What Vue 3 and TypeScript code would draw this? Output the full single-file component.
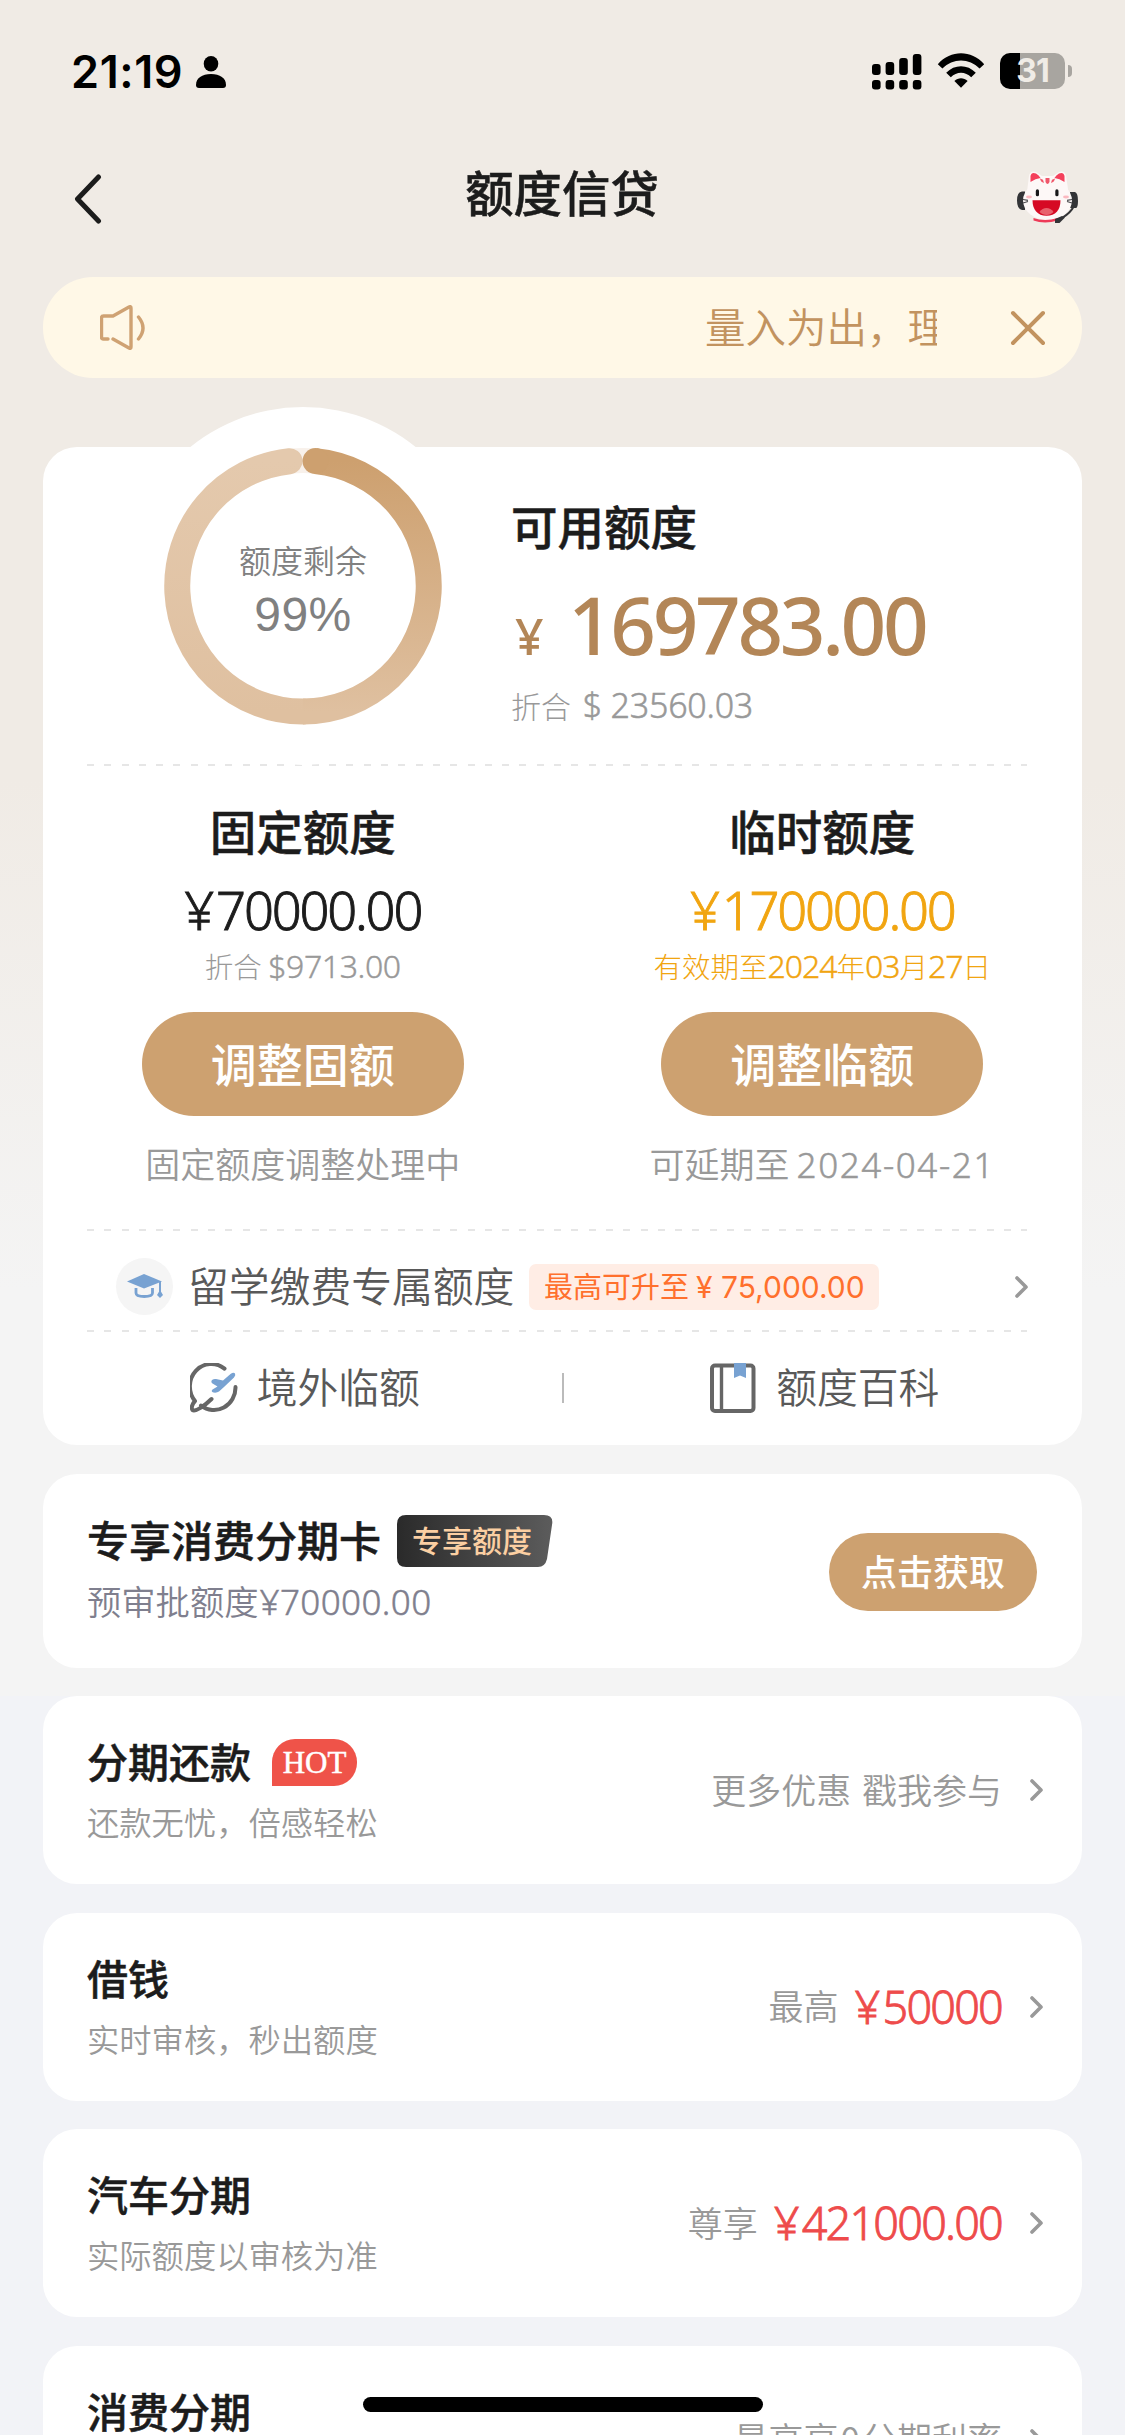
<script setup lang="ts">
interface Product {
  title: string
  sub?: string
  hot?: boolean
  hint: string
  amount?: string
}

const products: Product[] = [
  { title: '分期还款', sub: '还款无忧，倍感轻松', hot: true, hint: '更多优惠 戳我参与' },
  { title: '借钱', sub: '实时审核，秒出额度', hint: '最高', amount: '50000' },
  { title: '汽车分期', sub: '实际额度以审核为准', hint: '尊享', amount: '421000.00' },
  { title: '消费分期', hint: '最高享\u200a0\u200a分期利率' },
]
const signalBars = [11, 13, 17, 21]
</script>

<template>
  <div class="page">
    <div class="status">
      <span class="time">21:19</span>
      <svg class="person" width="30" height="32" viewBox="0 0 30 32">
        <ellipse cx="15" cy="7.8" rx="7.3" ry="7.8" />
        <path d="M0 29C0 22 6 18 15 18s15 4 15 11c0 2-1 3-3 3H3c-2 0-3-1-3-3z" />
      </svg>
      <div class="grow"></div>
      <svg class="signal" width="50" height="36" viewBox="0 0 50 36">
        <g v-for="(h, i) in signalBars" :key="i">
          <rect :x="i * 13.6" :y="21 - h" width="8.6" :height="h" rx="3" />
          <rect :x="i * 13.6" y="26" width="8.6" height="9.4" rx="3" />
        </g>
      </svg>
      <svg class="wifi" width="48" height="36" viewBox="0 0 48 36">
        <path d="M.8 11.2C14-3.300 34-3.300 47.200 11.200l-4.600 4.400C32 4.800 16 4.800 5.400 15.600z" />
        <path d="M9.200 19.800c8.400-8.600 21.200-8.600 29.600 0l-4.600 4.500c-5.800-6-14.600-6-20.400 0z" />
        <path d="M17.400 28c3.800-3.600 9.400-3.600 13.200 0L24 34.700z" />
      </svg>
      <div class="battery"><span>31</span></div>
      <div class="nub"></div>
    </div>

    <header class="nav">
      <svg class="back" width="28" height="50" viewBox="0 0 28 50">
        <path d="M24.500 3 3.500 25l21 22" fill="none" stroke="#1c1c1c" stroke-width="5" stroke-linecap="round" stroke-linejoin="round" />
      </svg>
      <h1>额度信贷</h1>
      <svg class="mascot" width="62" height="56" viewBox="0 0 62 56">
        <path d="M8 21.500H5Q0 22 0 30.500T5 40h3zM53 22h5q3 1 3 9t-3 7h-5z" fill="#333437" />
        <path d="M10 22 12 6q1-6 7-4l6 4h11l6-4q6-2 7 4l2.500 16z" fill="#fdf8f7" />
        <ellipse cx="30.500" cy="30.500" rx="24.500" ry="19.500" fill="#fdf8f7" />
        <path d="M13.500 12V6q1-4.500 5.500-2.500 3 1.500 4.500 4.500-5 .5-10 4zM47.500 12V6q-1-4.500-5.500-2.500-3 1.500-4.500 4.500 5 .5 10 4z" fill="#f4405b" />
        <path d="M28.500 8h4v4q-2 4-4 0zM23 8.500l3 1.200 1 3.300q-3.500-1-4-4.500zM38 8.500l-3 1.200-1 3.300q3.500-1 4-4.500z" fill="#f0566a" />
        <rect x="18.800" y="19.300" width="3.200" height="7" rx="1.600" fill="#18181a" />
        <rect x="38.300" y="19.300" width="3.200" height="7" rx="1.600" fill="#18181a" />
        <ellipse cx="12" cy="27" rx="3" ry="1.400" fill="#fbb9c0" />
        <ellipse cx="49" cy="27" rx="3" ry="1.400" fill="#fbb9c0" />
        <path d="M15.500 30.200h28c0 10-5 15.500-14 15.500s-14-6-14-15.500z" fill="#d60a24" />
        <path d="M22.500 42c3.500-5.500 10.500-5.500 14 0-4 4-10 4-14 0z" fill="#e8616c" />
        <path d="M6 29.500l5 .8M6 33l5-1.500M55 29.500l-5 .8M55 33l-5-1.500" stroke="#4a4a4d" stroke-width="1.200" />
        <path d="M16.500 48c7 2.500 16 2.500 24 0v2.500c-8 2.500-17 2.500-24 0z" fill="#ee3a58" />
        <path d="M57 36c-3 6-7 9-12 12" fill="none" stroke="#333437" stroke-width="2" />
        <path d="M38 49l7-3 3 1.500-5.500 5.500H38z" fill="#333437" />
      </svg>
    </header>

    <section class="notice">
      <svg class="speaker" width="48" height="46" viewBox="0 0 48 46" fill="none" stroke="#cfa273" stroke-width="3.400" stroke-linecap="round" stroke-linejoin="round">
        <path d="M8 34H3.500q-2 0-2-2V13q0-2 2-2H13L29 2q2-1 2 1v39q0 2-2 1L13 34" />
        <path d="M38.500 12q9 11 0 22" />
      </svg>
      <div class="ticker"><span>量入为出，理</span></div>
      <svg class="close" width="36" height="36" viewBox="0 0 36 36">
        <path d="M3 3 33 33M33 3 3 33" stroke="#c2935f" stroke-width="4" stroke-linecap="round" />
      </svg>
    </section>

    <main class="panel">
      <div class="halo"></div>
      <div class="hero">
        <div class="gauge">
          <svg width="278" height="278" viewBox="0 0 278 278">
            <defs>
              <linearGradient id="ringRight" x1="0" y1="0" x2="0" y2="1">
                <stop offset="0" stop-color="#cda06f" />
                <stop offset="1" stop-color="#dfc0a0" />
              </linearGradient>
              <linearGradient id="ringLeft" x1="0" y1="0" x2="0" y2="1">
                <stop offset="0" stop-color="#e4c9ad" />
                <stop offset="1" stop-color="#dfc0a0" />
              </linearGradient>
            </defs>
            <circle cx="139" cy="139" r="125.500" fill="none" stroke="#f8f1eb" stroke-width="25" />
            <path d="M139 264.500A125.500 125.500 0 0 1 125.500 14.200" fill="none" stroke="url(#ringLeft)" stroke-width="26" stroke-linecap="round" />
            <path d="M151.500 14.100A125.500 125.500 0 0 1 139 264.500" fill="none" stroke="url(#ringRight)" stroke-width="26" />
            <circle cx="151.500" cy="14.100" r="13" fill="#cda06f" />
          </svg>
          <div class="gauge-text">
            <span class="gauge-label">额度剩余</span>
            <span class="gauge-value">99%</span>
          </div>
        </div>
        <div class="avail">
          <h2>可用额度</h2>
          <div class="big"><i>¥</i><b>169783.00</b></div>
          <div class="conv">折合 <em>$ 23560.03</em></div>
        </div>
      </div>

      <div class="dash"></div>
      <div class="cols">
        <div class="col">
          <h2>固定额度</h2>
          <div class="amt"><i>¥</i>70000.00</div>
          <div class="small">折合 <em>$9713.00</em></div>
          <button>调整固额</button>
          <div class="note">固定额度调整处理中</div>
        </div>
        <div class="col">
          <h2>临时额度</h2>
          <div class="amt gold"><i>¥</i>170000.00</div>
          <div class="small gold">有效期至<em>2024</em>年<em>03</em>月<em>27</em>日</div>
          <button>调整临额</button>
          <div class="note">可延期至<em>2024-04-21</em></div>
        </div>
      </div>

      <div class="dash"></div>
      <div class="study">
        <div class="cap">
          <svg width="36" height="26" viewBox="0 0 36 26">
            <path d="M0 7.500 17 0l18 7.500L17 14.500z" fill="#78a2d2" />
            <path d="M9 14v5q0 3.500 8.200 3.500T25.500 19v-5" fill="none" stroke="#78a2d2" stroke-width="2.800" />
            <path d="M33 8v12" stroke="#78a2d2" stroke-width="2" />
            <path d="M33 16l3 5-3 3-3-3z" fill="#78a2d2" />
          </svg>
        </div>
        <span class="study-name">留学缴费专属额度</span>
        <span class="tag">最高可升至<em>¥ 75,000.00</em></span>
        <div class="grow"></div>
        <svg class="chev" width="14" height="22" viewBox="0 0 14 22"><path d="M2 2l9 9-9 9" /></svg>
      </div>
      <div class="dash"></div>
      <div class="links">
        <div class="link">
          <svg width="48" height="50" viewBox="0 0 48 50">
            <path d="M34.500 5.600A21.500 22.500 0 0 0 5 38C2 41 1 45 2.500 47c3 2 12-4 19-11M11 42.500A21.500 22.500 0 0 0 45.500 24" fill="none" stroke="#666" stroke-width="4" stroke-linecap="round" stroke-linejoin="round" />
            <path d="M22 17q2-1.500 4-1l7 1.500 7.500-6.500q3-2 4.500-.5 1 1.500-1 4L34 24l-5 4.500q-2 1.500-5.500 1-3-1-1-3l5-3-5-3q-2-1.500-.5-3.500z" fill="#78a2d2" />
          </svg>
          <span>境外临额</span>
        </div>
        <div class="sep"></div>
        <div class="link">
          <svg width="48" height="50" viewBox="0 0 48 50">
            <rect x="3" y="2.500" width="41.500" height="45.500" rx="3" fill="none" stroke="#666" stroke-width="4" />
            <path d="M12.500 3v45" stroke="#666" stroke-width="3.400" />
            <path d="M25 0h12v15l-6-2.500-6 2.500z" fill="#78a2d2" />
          </svg>
          <span>额度百科</span>
        </div>
      </div>
    </main>

    <section class="card promo">
      <div>
        <div class="title-line">
          <h3>专享消费分期卡</h3>
          <div class="badge">
            <svg width="156" height="52" viewBox="0 0 156 52">
              <defs>
                <linearGradient id="badgeFill" x1="0" y1="0" x2="1" y2="0">
                  <stop offset="0" stop-color="#2a2a2a" />
                  <stop offset="1" stop-color="#5c5c5c" />
                </linearGradient>
              </defs>
              <path d="M9 0h138q10 0 8 10l-5 34q-2 8-9 8H9q-9 0-9-9V9q0-9 9-9z" fill="url(#badgeFill)" />
            </svg>
            <span>专享额度</span>
          </div>
        </div>
        <p>预审批额度<em>¥70000.00</em></p>
      </div>
      <div class="grow"></div>
      <button>点击获取</button>
    </section>

    <section v-for="p in products" :key="p.title" class="card item">
      <div>
        <div class="title-line">
          <h3>{{ p.title }}</h3>
          <span v-if="p.hot" class="hot">HOT</span>
        </div>
        <p>{{ p.sub }}</p>
      </div>
      <div class="grow"></div>
      <span class="hint">{{ p.hint }}</span>
      <span v-if="p.amount" class="red"><i>¥</i>{{ p.amount }}</span>
      <svg class="chev" width="14" height="22" viewBox="0 0 14 22"><path d="M2 2l9 9-9 9" /></svg>
    </section>

    <div class="home"></div>
  </div>
</template>

<style>
body { margin: 0; }
</style>

<style scoped>
.page {
  position: relative;
  width: 1125px;
  height: 2435px;
  overflow: hidden;
  font-family: "Noto Sans CJK SC", sans-serif;
  background:
    linear-gradient(#f0ebe5 0, #f0ebe5 780px, #f4f4f4 1290px, #f4f4f4 1696px, transparent 1696px),
    #f2f3f7;
  color: #1c1c1c;
}
h1, h2, h3, p { margin: 0; font-weight: 500; }
h1, h2, h3 { -webkit-text-stroke: .5px currentColor; }
em, i, b { font-style: normal; }
button { border: 0; padding: 0; font-family: inherit; color: #fff; background: #cda170; }
svg { display: block; flex: none; }
.grow { flex: 1; }

.status { display: flex; height: 144px; box-sizing: border-box; padding: 0 53px 0 71px; }
.time { font: 600 45px/52px Inter, sans-serif; color: #000; margin-top: 46px; width: 111px; letter-spacing: .6px; white-space: nowrap; }
.person { margin: 56px 0 0 14px; }
.signal { margin-top: 54px; }
.wifi { margin: 53px 15px 0 15px; }
.battery {
  width: 65px; height: 36px; margin-top: 53px; border-radius: 10px;
  background: linear-gradient(90deg, #000 20px, #a8a5a0 20px);
  font: 700 32px/36px Inter, sans-serif; color: #f0ece6; text-align: center; letter-spacing: -1px;
}
.nub { width: 4px; height: 12px; margin: 65px 0 0 3px; border-radius: 0 5px 5px 0; background: #a8a5a0; }

.nav { display: flex; justify-content: space-between; height: 133px; padding: 0 46px 0 74px; }
.back { margin-top: 30px; }
h1 { font-size: 48.400px; line-height: 60px; margin-top: 17px; margin-left: 5px; }
.mascot { margin-top: 26px; }

.notice { display: flex; align-items: center; margin: 0 43px; height: 101px; border-radius: 50px; background: #fff8e7; }
.speaker { margin-left: 57px; }
.ticker { width: 232px; margin: -4px 0 0 557px; overflow: hidden; white-space: nowrap; font-size: 40.500px; line-height: 60px; font-weight: 350; color: #c2935f; }
.close { margin-left: 73px; }

.panel { position: relative; margin: 69px 43px 0; height: 998px; border-radius: 34px; background: #fff; }
.halo { position: absolute; left: 81px; top: -40px; width: 358px; height: 358px; border-radius: 50%; background: #fff; }
.hero { position: relative; display: flex; height: 317px; }
.gauge { position: relative; margin-left: 121px; width: 278px; height: 278px; }
.gauge-text { position: absolute; inset: 0; display: flex; flex-direction: column; align-items: center; color: #808080; }
.gauge-label { font-size: 32px; line-height: 40px; margin-top: 92px; font-weight: 350; }
.gauge-value { font: 400 48px/52px "Liberation Sans", sans-serif; margin-top: 10px; letter-spacing: .5px; }
.avail { margin-left: 69px; padding-top: 48px; }
h2 { font-size: 46.500px; line-height: 60px; }
.big { display: flex; align-items: baseline; color: #b38657; height: 90px; margin-top: 24px; }
.big i { font: 500 50px/90px "Noto Sans", sans-serif; width: 57px; padding-left: 4px; box-sizing: border-box; }
.big b { font: 500 80px/90px "Noto Sans", sans-serif; letter-spacing: -3.400px; }
.conv { margin-top: 14px; font-size: 30px; line-height: 44px; font-weight: 300; color: #999; white-space: nowrap; }
.conv em { font: 350 34px/44px "Noto Sans", sans-serif; letter-spacing: -.2px; margin-left: 5px; -webkit-text-stroke: .5px currentColor; }

.dash { height: 2px; margin: 0 55px 0 44px; background: repeating-linear-gradient(90deg, #e6e6e6 0 7px, transparent 7px 17.300px); }
.cols { display: flex; height: 463px; }
.col { flex: 1; display: flex; flex-direction: column; align-items: center; }
.col h2 { margin-top: 34px; }
.amt { font: 350 52.500px/60px "Noto Sans", sans-serif; margin-top: 20px; letter-spacing: -2.200px; -webkit-text-stroke: .9px currentColor; }
.amt i, .red i { margin-right: 4px; }
.small { font-size: 28.500px; line-height: 40px; margin-top: 6px; font-weight: 300; color: #999; white-space: nowrap; }
.small em { font: 350 32px/40px "Noto Sans", sans-serif; letter-spacing: -.4px; -webkit-text-stroke: .4px currentColor; }
.gold, .small.gold { color: #f1a511; }
.small.gold em { letter-spacing: -1px; }
.col button { width: 322px; height: 104px; border-radius: 52px; font-size: 46px; line-height: 100px; padding-bottom: 4px; font-weight: 500; margin-top: 26px; }
.note { font-size: 35px; line-height: 50px; margin-top: 22px; color: #999; font-weight: 350; white-space: nowrap; }
.note em { font-family: "Noto Sans", sans-serif; margin-left: 7px; letter-spacing: 1.600px; -webkit-text-stroke: .5px currentColor; }

.study { display: flex; align-items: center; height: 99px; padding: 12px 53px 0 73px; box-sizing: border-box; }
.cap { width: 57px; height: 57px; border-radius: 50%; background: #f5f5f5; display: flex; align-items: center; justify-content: center; }
.study-name { font-size: 40.800px; line-height: 60px; margin: -4px 0 0 15px; color: #595959; font-weight: 350; white-space: nowrap; }
.tag { margin-left: 15px; width: 350px; height: 46px; border-radius: 7px; background: #ffede5; color: #ff702d; font-size: 29px; line-height: 43px; text-align: center; white-space: nowrap; }
.tag em { font: 400 30px/43px Inter, sans-serif; margin-left: 7px; }
.chev { fill: none; stroke: #999; stroke-width: 3.600; stroke-linecap: round; stroke-linejoin: round; }

.links { display: flex; align-items: center; height: 111px; }
.link { flex: 1; display: flex; justify-content: center; align-items: center; padding-left: 4px; font-size: 40.800px; line-height: 60px; color: #595959; font-weight: 350; }
.link span { margin: -4px 0 0 19px; }
.sep { width: 2px; height: 30px; margin: 0 -1px; background: #bbb; }

.card { display: flex; align-items: center; margin: 28.500px 43px 0; padding: 0 38px 0 44px; border-radius: 34px; background: #fff; height: 188px; box-sizing: border-box; }
.title-line { display: flex; align-items: center; height: 54px; }
h3 { font-size: 41px; line-height: 54px; margin-top: -4px; }
p { white-space: nowrap; }
.promo { height: 194px; padding-right: 45px; }
.promo h3 { font-size: 42px; }
.badge { position: relative; margin-left: 16px; }
.badge span { position: absolute; left: 15px; top: 0; font-size: 30px; line-height: 49px; font-weight: 500; color: #fbcfa2; white-space: nowrap; }
.promo p { font-size: 34.300px; line-height: 50px; margin-top: 7px; margin-bottom: 1px; color: #7f7f8e; font-weight: 350; }
.promo em { font: 350 35px/50px "Noto Sans", sans-serif; letter-spacing: .4px; margin-left: 1px; -webkit-text-stroke: .5px currentColor; }
.promo button { width: 208px; height: 78px; border-radius: 39px; font-size: 36px; line-height: 75px; padding-bottom: 3px; font-weight: 500; margin-top: 2px; }
.item p { font-size: 32.300px; line-height: 46px; height: 46px; margin-top: 9px; margin-bottom: 1px; color: #999; font-weight: 350; }
.hot { margin-left: 21px; width: 85px; height: 47px; border-radius: 23px 23px 23px 0; background: #ef5349; color: #fff; font: 400 31px/47px "Liberation Serif", serif; text-align: center; -webkit-text-stroke: .5px #fff; }
.hint { font-size: 35px; color: #999; font-weight: 350; white-space: nowrap; margin-top: -4px; word-spacing: 3px; }
.red { font: 350 45px/60px "Noto Sans", sans-serif; color: #ee4b4b; margin-left: 16px; letter-spacing: -1.800px; -webkit-text-stroke: .8px currentColor; }
.item .chev { margin-left: 28px; }

.home { position: absolute; left: 363px; top: 2397px; width: 400px; height: 15px; border-radius: 8px; background: #000; }
</style>
